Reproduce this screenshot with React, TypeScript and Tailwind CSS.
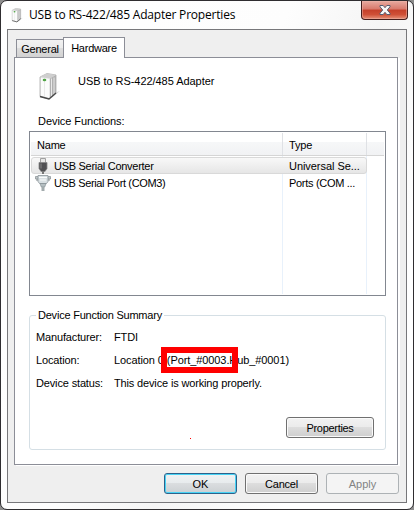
import type { ReactNode } from "react";

function TowerIcon({ className }: { className: string }) {
  return (
    <svg className={className} viewBox="0 0 24 28">
      <path d="M11 27l11-9-3 1-5 5z" fill="#dadada" />
      <path d="M2 4l7-3.5 9 1.500v18l-7 6-9-2.500z" fill="#e9e9e9" stroke="#a2a2a2" strokeWidth=".7" />
      <path d="M2 4l7-3.500 9 1.500-6 3.500z" fill="#cfcfcf" />
      <path d="M3 5l3 .4v18L3 22.700zM7 5.500l4 .5v18.800l-4-1z" fill="#fbfbfb" />
      <path d="M12 5.500l6-3.500v18l-6 5z" fill="#b0b0b0" />
      <path d="M13.500 5.500v18M16 4.500v17" stroke="#e9e9e9" strokeWidth="1" />
      <path d="M2 23.500l9 2.500 7-6" fill="none" stroke="#484848" strokeWidth="1.300" />
      <ellipse cx="6.500" cy="7" rx="1.800" ry="1.300" fill="#50a545" />
    </svg>
  );
}

function UsbIcon() {
  return (
    <svg className="h-4 w-4 shrink-0" viewBox="0 0 16 16">
      <path d="M5.500.5h5v5h-5z" fill="#e6e6e6" stroke="#a0a0a0" />
      <path d="M4 4.500h8v6L10 13.500H6l-2-3z" fill="#505053" stroke="#858587" strokeWidth=".8" />
      <path d="M6 5.500v5" stroke="#858587" />
      <path d="M7 13h2v3H7z" fill="#777" />
    </svg>
  );
}

function SerialIcon() {
  return (
    <svg className="h-4 w-4 shrink-0" viewBox="0 0 16 16">
      <path d="M.5 1.500h15v2.500h-15z" fill="#c0c6c8" stroke="#858d91" strokeWidth=".7" />
      <path d="M3 .5h10v6L11.500 8.500h-7L3 6.500z" fill="#d9e0e3" stroke="#8b9499" strokeWidth=".8" />
      <path d="M4 2.500h8M5 5h6" stroke="#f8fafa" />
      <path d="M5 8.500h6L9.700 12H6.300z" fill="#b5bfc2" stroke="#858f93" strokeWidth=".7" />
      <path d="M6.500 12h3v4h-3z" fill="#a2abad" />
      <path d="M2 4v2M14 4v2" stroke="#858d90" />
    </svg>
  );
}

function Button({ className, children }: { className: string; children: ReactNode }) {
  return (
    <button className={`flex h-[21px] items-center justify-center rounded-[3px] border pt-[2px] leading-none ${className}`}>
      {children}
    </button>
  );
}

const raised =
  "border-[#707070] bg-[linear-gradient(#f2f2f2,#ebebeb_48%,#dddddd_50%,#cfcfcf)] shadow-[inset_0_0_0_1px_#fafafa]";

export default function App() {
  return (
    <div className="h-[510px] w-[414px] bg-[#8d8d8d] font-['Liberation_Sans',Arial,sans-serif] text-[11px] text-black">
      <div className="flex h-[510px] w-[414px] flex-col rounded-[7px] border border-[#2f2d30] bg-[linear-gradient(115deg,#fff_0%,#fdfdfd_45%,#f5f5f5_60%,#fff_80%)] px-[6px] pb-[6px]">
        <header className="flex h-7 shrink-0 items-start">
          <TowerIcon className="mt-[7px] ml-[4px] h-[15px] w-[13px]" />
          <h1 className="mt-[5px] ml-[5px] font-['Open_Sans','Noto_Sans',sans-serif] text-[12px] leading-[18px] tracking-[-0.2px] whitespace-nowrap">
            USB to RS-422/485 Adapter Properties
          </h1>
          <button className="-mr-px ml-auto flex h-[19px] w-[47px] items-center justify-center rounded-b-[4px] border border-t-0 border-[#431e1d] bg-[linear-gradient(#e8aaa0,#d8796c_45%,#c5402a_50%,#cf5037_75%,#e69078)] shadow-[inset_0_0_0_1px_#edb5aa80]">
            <svg className="h-3 w-3" viewBox="0 0 12 12">
              <path d="M1 1.500h3.200L6 3.700l1.800-2.200H11v1.300L8.300 6 11 9.200v1.300H7.800L6 8.300l-1.800 2.200H1V9.200L3.700 6 1 2.800z" fill="#f7f7f8" stroke="#565c70" />
            </svg>
          </button>
        </header>

        <main className="flex min-h-0 w-[400px] grow flex-col border border-[#77777a] bg-[#efefef] pt-[7px] pl-[6px]">
          <nav className="flex h-5 items-end pl-[2px]">
            <div className="flex h-[18px] w-[47px] items-center justify-center border border-r-0 border-b-0 border-[#8c8e97] bg-[linear-gradient(#f2f2f2,#ebebeb_48%,#dddddd_50%,#d2d2d2)] pt-[2px] tracking-[-0.2px]">
              General
            </div>
            <div className="z-10 -mb-px flex h-[21px] w-[62px] justify-center border border-b-0 border-[#8c8e97] bg-white pt-[4px] leading-[13px] tracking-[-0.25px]">
              Hardware
            </div>
          </nav>

          <section className="flex h-[408px] w-[384px] flex-col border border-[#8c8e97] bg-white px-[14px] shadow-[2px_1px_0_#fff]">
            <div className="flex h-[57px] shrink-0 items-start">
              <TowerIcon className="mt-[15px] ml-[9px] h-[28px] w-[24px]" />
              <span className="mt-[17px] ml-[16px] leading-[13px] tracking-[-0.05px]">USB to RS-422/485 Adapter</span>
            </div>
            <div className="h-[16px] shrink-0 pl-[9px] leading-[13px] tracking-[-0.05px]">Device Functions:</div>

            <div className="flex h-[165px] w-[357px] shrink-0 flex-col border border-[#828790] p-px">
              <div className="flex h-[23px] shrink-0 border-b border-[#d5d5d5] bg-[linear-gradient(#fff_40%,#f6f7f8_42%,#f1f2f4)] leading-[25px]">
                <div className="w-[252px] border-r border-[#dfe1e5] pl-[6px] tracking-[-0.2px]">Name</div>
                <div className="w-[84px] border-r border-[#dfe1e5] pl-[6px] tracking-[-0.2px]">Type</div>
              </div>
              <div className="flex grow flex-col bg-[linear-gradient(90deg,transparent_251px,#e8f1fb_251px,#e8f1fb_252px,transparent_252px,transparent_335px,#e8f1fb_335px,#e8f1fb_336px,transparent_336px)] pt-px">
                <div className="flex h-[17px] w-[336px] items-center rounded-[3px] border border-[#d9d9d9] bg-[linear-gradient(#f8f8f8,#e6e6e6)]">
                  <div className="flex w-[251px] items-center pl-[3px]">
                    <UsbIcon />
                    <span className="ml-[3px] pt-px tracking-[-0.28px]">USB Serial Converter</span>
                  </div>
                  <span className="pt-px pl-[6px] tracking-[-0.05px]">Universal Se...</span>
                </div>
                <div className="flex h-[17px] items-center">
                  <div className="flex w-[252px] items-center pl-[4px]">
                    <SerialIcon />
                    <span className="ml-[3px] pt-[2px] tracking-[-0.36px]">USB Serial Port (COM3)</span>
                  </div>
                  <span className="pt-[2px] pl-[6px] tracking-[-0.3px]">Ports (COM ...</span>
                </div>
              </div>
            </div>

            <fieldset className="mt-[13px] h-[141px] w-[357px] shrink-0 rounded-[3px] border border-[#d5dfe5]">
              <legend className="ml-[6px] h-[13px] px-[2px] leading-[13px] tracking-[-0.22px]">Device Function Summary</legend>
              <dl className="mt-[9px] grid grid-cols-[78px_1fr] gap-y-[10px] pl-[6px] leading-[13px] tracking-[-0.15px]">
                <dt>Manufacturer:</dt>
                <dd>FTDI</dd>
                <dt>Location:</dt>
                <dd className="relative tracking-[-0.09px] whitespace-nowrap">
                  Location 0 (Port_#0003.Hub_#0001)
                  <span className="absolute top-[-7px] left-[47px] h-[26px] w-[77px] border-[6px] border-[#ff0000]" />
                </dd>
                <dt>Device status:</dt>
                <dd>This device is working properly.</dd>
              </dl>
              <div className="mt-[27px] flex justify-end pr-[11px]">
                <span className="mt-[21px] mr-[95px] h-px w-px bg-[#ff0000]" />
                <Button className={`w-[88px] tracking-[-0.3px] ${raised}`}>Properties</Button>
              </div>
            </fieldset>
          </section>

          <footer className="mt-[8px] flex justify-end gap-[8px] pr-[7px]">
            <Button className="w-[73px] border-[#2c628b] bg-[linear-gradient(#f0f2f3,#e7ebed_48%,#dadddf_50%,#cbd0d3)] shadow-[inset_0_0_0_1px_#48d3f5]">OK</Button>
            <Button className={`w-[73px] tracking-[-0.2px] ${raised}`}>Cancel</Button>
            <Button className="w-[73px] border-[#adb2b5] bg-[#f4f4f4] text-[#838383]">Apply</Button>
          </footer>
        </main>
      </div>
    </div>
  );
}
